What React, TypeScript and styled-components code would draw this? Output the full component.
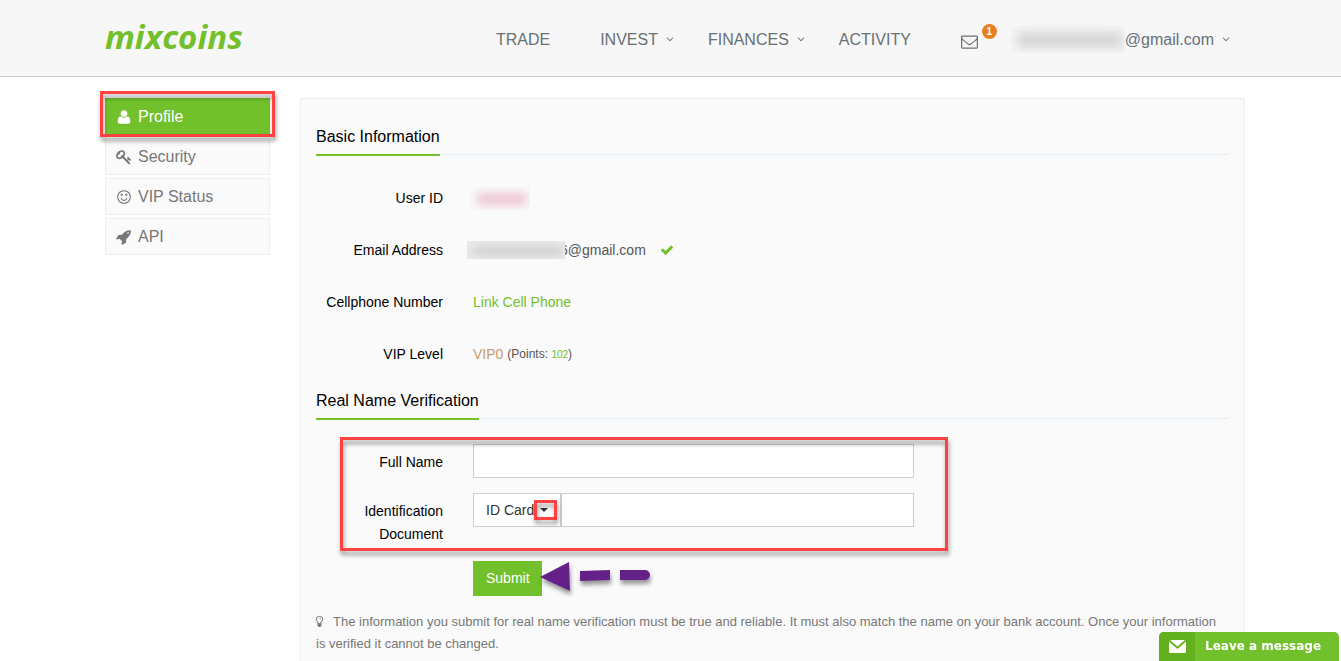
import React from "react";
import styled, { createGlobalStyle } from "styled-components";

const green = "#72c02c";
const red = "#ff4343";

const GlobalStyle = createGlobalStyle`
  *, *::before, *::after { box-sizing: border-box; }
  body {
    margin: 0;
    background: #fff;
    color: #555;
    font-family: "Liberation Sans", Arial, sans-serif;
    font-size: 14px;
    line-height: 23px;
  }
  a { color: inherit; text-decoration: none; }
`;

const glyphs = {
  user: "M1600 1405q0 120-73 189.500t-194 69.500h-874q-121 0-194-69.500t-73-189.500q0-53 3.500-103.500t14-109 26.500-108.500 43-97.500 62-81 85.500-53.500 111.500-20q9 0 42 21.500t74.500 48 108 48 133.500 21.500 133.500-21.500 108-48 74.500-48 42-21.500q61 0 111.500 20t85.500 53.500 62 81 43 97.500 26.500 108.500 14 109 3.500 103.500zm-320-893q0 159-112.500 271.500t-271.500 112.500-271.500-112.500-112.500-271.500 112.500-271.500 271.500-112.500 271.500 112.500 112.500 271.500z",
  key: "M832 512q0-80-56-136t-136-56-136 56-56 136q0 42 19 83-41-19-83-19-80 0-136 56t-56 136 56 136 136 56 136-56 56-136q0-42-19-83 41 19 83 19 80 0 136-56t56-136zm851 704q0 17-49 66t-66 49q-9 0-28.5-16t-36.5-33-38.5-40-24.5-26l-96 96 220 220q28 28 28 68 0 42-39 81t-81 39q-40 0-68-28l-671-671q-176 131-365 131-163 0-265.5-102.5t-102.5-265.5q0-160 95-313t248-248 313-95q163 0 265.5 102.5t102.5 265.5q0 189-131 365l355 355 96-96q-3-3-26-24.5t-40-38.5-33-36.5-16-28.5q0-17 49-66t66-49q13 0 23 10 6 6 46 44.5t82 79.5 86.5 86 73 78 28.5 41z",
  smile: "M1262 1075q-37 121-138 195t-228 74-228-74-138-195q-8-25 4-48.5t38-31.5q25-8 48.5 4t31.5 38q25 80 92.5 129.5t151.5 49.5 151.5-49.5 92.5-129.5q8-26 32-38t49-4 37 31.5 4 48.5zm-494-435q0 53-37.5 90.5t-90.5 37.5-90.5-37.5-37.5-90.5 37.5-90.5 90.5-37.5 90.5 37.5 37.5 90.5zm512 0q0 53-37.5 90.5t-90.5 37.5-90.5-37.5-37.5-90.5 37.5-90.5 90.5-37.5 90.5 37.5 37.5 90.5zm256 256q0-130-51-248.5t-136.5-204-204-136.5-248.5-51-248.5 51-204 136.5-136.5 204-51 248.5 51 248.5 136.5 204 204 136.5 248.5 51 248.5-51 204-136.5 136.5-204 51-248.5zm128 0q0 209-103 385.5t-279.5 279.5-385.5 103-385.5-103-279.5-279.5-103-385.5 103-385.5 279.5-279.5 385.5-103 385.5 103 279.5 279.5 103 385.5z",
  rocket: "M1440 448q0-40-28-68t-68-28-68 28-28 68 28 68 68 28 68-28 28-68zm224-288q0 249-75.5 430.5t-253.5 360.5q-81 80-195 176l-20 379q-2 16-16 26l-384 224q-7 4-16 4-12 0-23-9l-64-64q-13-14-8-32l85-276-281-281-276 85q-3 1-9 1-14 0-23-9l-64-64q-17-19-5-39l224-384q10-14 26-16l379-20q96-114 176-195 188-187 358-258t431-71q14 0 24 9.5t10 22.5z",
  check: "M1671 566q0 40-28 68l-724 724-136 136q-28 28-68 28t-68-28l-136-136-362-362q-28-28-28-68t28-68l136-136q28-28 68-28t68 28l294 295 656-657q28-28 68-28t68 28l136 136q28 28 28 68z",
  envelope: "M1664 1504v-768q-32 36-69 66-268 206-426 338-51 43-83 67t-86.5 48.5-102.5 24.5h-2q-48 0-102.5-24.5t-86.5-48.5-83-67q-158-132-426-338-37-30-69-66v768q0 13 9.5 22.5t22.5 9.5h1472q13 0 22.5-9.5t9.5-22.5zm0-1051v-24.5l-.5-13-3-12.5-5.5-9-9-7.5-14-2.5h-1472q-13 0-22.5 9.5t-9.5 22.5q0 168 147 284 193 152 401 317 6 5 35 29.5t46 37.5 44.5 31.5 50.5 27.5 43 9h2q20 0 43-9t50.5-27.5 44.5-31.5 46-37.5 35-29.5q208-165 401-317 54-43 100.5-115.5t46.5-131.5zm128-37v1088q0 66-47 113t-113 47h-1472q-66 0-113-47t-47-113v-1088q0-66 47-113t113-47h1472q66 0 113 47t47 113z",
  bulb: "M1120 576q0 13-9.5 22.5t-22.5 9.5-22.5-9.5-9.5-22.5q0-46-54-71t-106-25q-13 0-22.5-9.5t-9.5-22.5 9.5-22.5 22.5-9.5q50 0 99.5 16t87 54 37.5 90zm160 0q0-72-34.5-134t-90-101.5-123-62-136.5-22.5-136.5 22.5-123 62-90 101.5-34.5 134q0 101 68 180 10 11 30.5 33t30.5 33q128 153 141 298h228q13-145 141-298 10-11 30.5-33t30.5-33q68-79 68-180zm128 0q0 155-103 268-45 49-74.5 87t-59.5 95.5-34 107.5q47 28 47 82 0 37-25 64 25 27 25 64 0 52-45 81 13 23 13 47 0 46-31.5 71t-77.5 25q-20 44-60 70t-87 26-87-26-60-70q-46 0-77.5-25t-31.5-71q0-24 13-47-45-29-45-81 0-37 25-64-25-27-25-64 0-54 47-82-4-50-34-107.5t-59.5-95.5-74.5-87q-103-113-103-268 0-99 44.5-184.5t117-142 164-89 186.5-32.5 186.5 32.5 164 89 117 142 44.5 184.5z",
  angle: "M1395 736q0 13-10 23l-466 466q-10 10-23 10t-23-10l-466-466q-10-10-10-23t10-23l50-50q10-10 23-10t23 10l393 393 393-393q10-10 23-10t23 10l50 50q10 10 10 23z",
};

type GlyphName = keyof typeof glyphs;

const Glyph = styled.svg<{ $size: number }>`
  flex: none;
  width: ${(p) => p.$size}px;
  height: ${(p) => p.$size}px;
  fill: currentColor;
`;

const Icon = ({ name, size }: { name: GlyphName; size: number }) => (
  <Glyph $size={size} viewBox="0 0 1792 1792" aria-hidden="true">
    <path d={glyphs[name]} />
  </Glyph>
);

const Page = styled.div`
  display: flex;
  flex-direction: column;
  min-height: 100vh;
`;

const Header = styled.header`
  display: flex;
  align-items: center;
  justify-content: space-between;
  height: 77px;
  padding: 0 109px 0 105px;
  background: #f7f7f7;
  border-bottom: 1px solid #c9c9c9;
`;

const Logo = styled.a`
  padding-bottom: 2px;
  color: ${green};
  font: italic 700 33px/40px "Open Sans", "Noto Sans", sans-serif;
`;

const Nav = styled.nav`
  display: flex;
  align-items: center;
  color: #687074;
  font-size: 16px;
  white-space: nowrap;
  padding-top: 2px;
`;

const NavLink = styled.a<{ $menu?: boolean }>`
  display: flex;
  align-items: center;
  gap: 6px;
  margin-right: ${(p) => (p.$menu ? 32 : 50)}px;
`;

const MailLink = styled.a`
  position: relative;
  display: flex;
  width: 17px;
  margin-right: 32px;
  padding-top: 4px;
`;

const Badge = styled.span`
  position: absolute;
  top: -5px;
  left: 21px;
  width: 15px;
  height: 15px;
  border-radius: 50%;
  background: #e67e22;
  color: #fff;
  font-size: 10px;
  font-weight: 700;
  line-height: 15px;
  text-align: center;
`;

const Account = styled.a`
  display: flex;
  align-items: center;
  gap: 6px;
`;

const Redacted = styled.span<{ $width: number; $height: number; $tint: string; $back: string }>`
  position: relative;
  z-index: 1;
  flex: none;
  overflow: hidden;
  width: ${(p) => p.$width}px;
  height: ${(p) => p.$height}px;
  background: ${(p) => p.$back};

  &::before {
    content: "";
    position: absolute;
    inset: 7px 3px 5px 7px;
    background: ${(p) => p.$tint};
    filter: blur(5px);
  }
`;

const AccountName = styled.span`
  display: flex;
  align-items: center;
`;

const Main = styled.main`
  display: flex;
  flex: 1;
  gap: 30px;
  padding: 21px 96px 0 105px;
`;

const Sidebar = styled.nav`
  display: flex;
  flex: none;
  flex-direction: column;
  gap: 3px;
  width: 165px;
`;

const SideLink = styled.a<{ $active?: boolean }>`
  position: relative;
  display: flex;
  align-items: center;
  gap: 6px;
  height: 37px;
  padding: 0 10px;
  border: 1px solid ${(p) => (p.$active ? green : "#eee")};
  background: ${(p) => (p.$active ? green : "#fafafa")};
  color: ${(p) => (p.$active ? "#fff" : "#777")};
  font-size: 16px;
`;

const Highlight = styled.span<{ $inset: string }>`
  position: absolute;
  z-index: 2;
  inset: ${(p) => p.$inset};
  border: 3px solid ${red};
  filter: drop-shadow(1px 4px 2px rgba(0, 0, 0, 0.4));
  pointer-events: none;
`;

const Panel = styled.section`
  flex: 1;
  min-width: 0;
  padding: 17px 15px 0;
  border: 1px solid #eee;
  border-bottom: 0;
  background: #fafafa;
`;

const Heading = styled.h2`
  display: flex;
  height: 39px;
  margin: 0;
  border-bottom: 1px dotted #d5e2f0;
  color: #000;
  font-size: 16px;
  font-weight: 400;

  span {
    height: 40px;
    border-bottom: 2px solid ${green};
    line-height: 42px;
  }
`;

const Details = styled.dl`
  margin: 17px 0 0;
`;

const DetailRow = styled.div`
  display: grid;
  grid-template-columns: 127px 1fr;
  column-gap: 30px;
  align-items: center;
  height: 52px;

  dt {
    color: #000;
    text-align: right;
    white-space: nowrap;
  }
  dd {
    display: flex;
    align-items: center;
    margin: 0;
  }
`;

const Email = styled.span`
  margin: 0 14px 0 -5px;
`;

const Verified = styled.span`
  display: flex;
  color: ${green};
`;

const IdWrap = styled.span`
  display: flex;
  margin-left: -3px;
`;

const EmailWrap = styled.span`
  display: flex;
  align-items: center;
  margin-left: -6px;
`;

const GreenLink = styled.a`
  color: ${green};
`;

const Level = styled.span`
  margin-right: 4px;
  color: #c69c6d;
`;

const Points = styled.span`
  font-size: 12px;

  b {
    color: ${green};
    font-size: 10px;
    font-weight: 400;
  }
`;

const Fields = styled.div`
  position: relative;
  display: grid;
  row-gap: 15px;
  max-width: 598px;
  margin-top: 25px;
`;

const FieldRow = styled.div`
  display: grid;
  grid-template-columns: 127px 1fr;
  column-gap: 30px;
  align-items: start;

  label {
    padding-top: 7px;
    color: #000;
    text-align: right;
  }
`;

const TextInput = styled.input`
  flex: 1;
  width: 100%;
  min-width: 0;
  height: 34px;
  padding: 6px 12px;
  border: 1px solid #ccc;
  border-radius: 0;
  background: #fff;
  color: #555;
  font: inherit;
`;

const InputGroup = styled.div`
  display: flex;
`;

const SelectWrap = styled.div`
  position: relative;
  width: 88px;
`;

const Select = styled.select`
  appearance: none;
  width: 100%;
  height: 34px;
  padding: 0 0 0 12px;
  border: 1px solid #ccc;
  border-radius: 0;
  background: #fff;
  color: #333;
  font: inherit;
`;

const Caret = styled.svg`
  position: absolute;
  top: 15px;
  left: 67px;
  width: 8px;
  height: 4px;
  fill: #333;
  pointer-events: none;
`;

const Actions = styled.div`
  position: relative;
  display: flex;
  width: fit-content;
  margin: 15px 0 15px 157px;
`;

const SubmitButton = styled.button`
  height: 35px;
  padding: 0 12px 0 13px;
  border: 0;
  background: ${green};
  color: #fff;
  font: inherit;
`;

const Pointer = styled.svg`
  position: absolute;
  top: -2px;
  left: 66px;
  width: 116px;
  height: 40px;
  overflow: visible;
  fill: #642189;
  filter: drop-shadow(1px 4px 2px rgba(0, 0, 0, 0.4));
  pointer-events: none;
`;

const Note = styled.p`
  margin: 0;
  padding-right: 12px;
  color: #777;
  font-size: 13px;
  line-height: 22px;

  svg {
    margin: 0 7px 0 -3px;
    vertical-align: -2px;
  }
`;

const ChatButton = styled.button`
  position: fixed;
  z-index: 3;
  right: 2px;
  bottom: 0;
  display: flex;
  overflow: hidden;
  width: 180px;
  height: 29px;
  padding: 0;
  border: 0;
  border-radius: 5px 5px 0 0;
  background: ${green};
  color: #fff;
  font: 700 12px/29px "DejaVu Sans", Verdana, sans-serif;
  white-space: nowrap;
`;

const ChatIcon = styled.span`
  display: flex;
  align-items: center;
  justify-content: center;
  width: 36px;
  height: 29px;
  margin-right: 10px;
  background: #62b01e;
`;

const sideLinks: { label: string; icon: GlyphName; active?: boolean }[] = [
  { label: "Profile", icon: "user", active: true },
  { label: "Security", icon: "key" },
  { label: "VIP Status", icon: "smile" },
  { label: "API", icon: "rocket" },
];

export default function App() {
  return (
    <>
      <GlobalStyle />
      <Page>
        <Header>
          <Logo href="#">mixcoins</Logo>
          <Nav aria-label="Main">
            <NavLink href="#">TRADE</NavLink>
            <NavLink href="#" $menu>
              INVEST
              <Icon name="angle" size={12} />
            </NavLink>
            <NavLink href="#" $menu>
              FINANCES
              <Icon name="angle" size={12} />
            </NavLink>
            <NavLink href="#">ACTIVITY</NavLink>
            <MailLink href="#" aria-label="Messages">
              <Icon name="envelope" size={17} />
              <Badge>1</Badge>
            </MailLink>
            <Account href="#">
              <AccountName>
                <Redacted $width={115} $height={28} $tint="#d6d7d8" $back="#f5f5f5" />
                @gmail.com
              </AccountName>
              <Icon name="angle" size={12} />
            </Account>
          </Nav>
        </Header>
        <Main>
          <Sidebar aria-label="Account">
            {sideLinks.map((link) => (
              <SideLink key={link.label} href="#" $active={link.active}>
                <Icon name={link.icon} size={16} />
                {link.label}
                {link.active && <Highlight $inset="-8px -6px -3px -6px" />}
              </SideLink>
            ))}
          </Sidebar>
          <Panel>
            <Heading>
              <span>Basic Information</span>
            </Heading>
            <Details>
              <DetailRow>
                <dt>User ID</dt>
                <dd>
                  <IdWrap>
                    <Redacted $width={60} $height={24} $tint="#eec5d1" $back="#fafafa" />
                  </IdWrap>
                </dd>
              </DetailRow>
              <DetailRow>
                <dt>Email Address</dt>
                <dd>
                  <EmailWrap>
                    <Redacted $width={98} $height={18} $tint="#c4c4c4" $back="#e9e9e9" />
                    <Email>6@gmail.com</Email>
                  </EmailWrap>
                  <Verified>
                    <Icon name="check" size={14} />
                  </Verified>
                </dd>
              </DetailRow>
              <DetailRow>
                <dt>Cellphone Number</dt>
                <dd>
                  <GreenLink href="#">Link Cell Phone</GreenLink>
                </dd>
              </DetailRow>
              <DetailRow>
                <dt>VIP Level</dt>
                <dd>
                  <Level>VIP0</Level>
                  <Points>
                    (Points: <b>102</b>)
                  </Points>
                </dd>
              </DetailRow>
            </Details>
            <Heading>
              <span>Real Name Verification</span>
            </Heading>
            <form onSubmit={(e) => e.preventDefault()}>
              <Fields>
                <FieldRow>
                  <label htmlFor="full-name">Full Name</label>
                  <TextInput id="full-name" type="text" />
                </FieldRow>
                <FieldRow>
                  <label htmlFor="document-number">Identification Document</label>
                  <InputGroup>
                    <SelectWrap>
                      <Select aria-label="Document type" defaultValue="id">
                        <option value="id">ID Card</option>
                        <option value="passport">Passport</option>
                      </Select>
                      <Caret viewBox="0 0 8 4">
                        <path d="M0 0h8L4 4z" />
                      </Caret>
                      <Highlight $inset="7px 4px 7px 61px" />
                    </SelectWrap>
                    <TextInput id="document-number" type="text" />
                  </InputGroup>
                </FieldRow>
                <Highlight $inset="-7px -34px -5px 24px" />
              </Fields>
              <Actions>
                <SubmitButton type="submit">Submit</SubmitButton>
                <Pointer viewBox="0 0 116 40" aria-hidden="true">
                  <path d="M1 18 30 3 31 32z" />
                  <path d="M41 12 71 11V21L41 22z" />
                  <path d="M81 11H106a5 5 0 0 1 0 10L81 21z" />
                </Pointer>
              </Actions>
            </form>
            <Note>
              <Icon name="bulb" size={13} />
              The information you submit for real name verification must be true and reliable. It
              must also match the name on your bank account. Once your information is verified it
              cannot be changed.
            </Note>
          </Panel>
        </Main>
        <ChatButton type="button">
          <ChatIcon>
            <svg width="17" height="13" viewBox="0 0 17 13" fill="#fff" aria-hidden="true">
              <path d="M1 0H16L8.500 6.500z" />
              <path d="M0 1.500 8.500 9 17 1.500V11.500Q17 13 15.500 13H1.500Q0 13 0 11.500z" />
            </svg>
          </ChatIcon>
          Leave a message
        </ChatButton>
      </Page>
    </>
  );
}
